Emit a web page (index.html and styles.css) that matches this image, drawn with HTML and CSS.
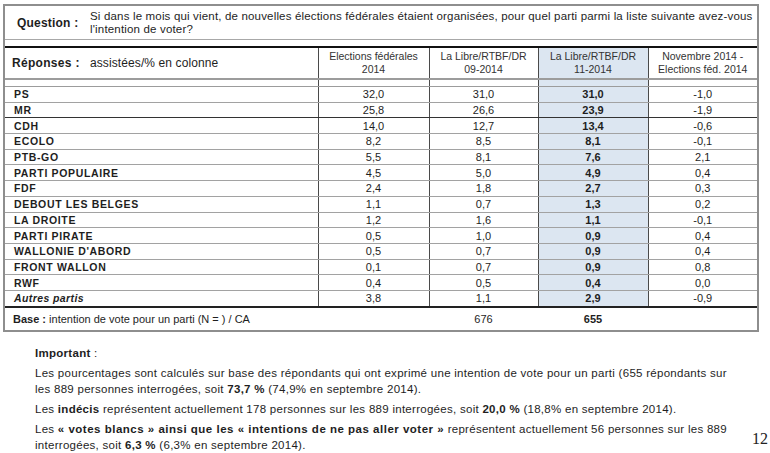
FILE: index.html
```html
<!DOCTYPE html>
<html lang="fr">
<head>
<meta charset="utf-8">
<title>Intentions de vote</title>
<link rel="stylesheet" href="styles.css">
</head>
<body>
<div class="page">
  <div class="sheet">
    <div class="question">
      <div class="q-label">Question :</div>
      <div class="q-text">Si dans le mois qui vient, de nouvelles élections fédérales étaient organisées, pour quel parti parmi la liste suivante avez-vous<br>l'intention de voter?</div>
    </div>
    <div class="q-spacer"></div>
    <table class="results">
      <colgroup>
        <col class="c-name"><col class="c-num"><col class="c-num2"><col class="c-num3"><col>
      </colgroup>
      <thead>
        <tr class="head">
          <th class="resp"><span class="resp-label">Réponses :</span><span class="resp-sub">assistées/% en colonne</span></th>
          <th>Elections fédérales<br>2014</th>
          <th>La Libre/RTBF/DR<br>09-2014</th>
          <th class="hl">La Libre/RTBF/DR<br>11-2014</th>
          <th>Novembre 2014 -<br>Elections féd. 2014</th>
        </tr>
        <tr class="gap"><td></td><td></td><td></td><td class="hl"></td><td></td></tr>
      </thead>
      <tbody>
        <tr><td class="party">PS</td><td>32,0</td><td>31,0</td><td class="hl">31,0</td><td>-1,0</td></tr>
        <tr class="dark"><td class="party">MR</td><td>25,8</td><td>26,6</td><td class="hl">23,9</td><td>-1,9</td></tr>
        <tr><td class="party">CDH</td><td>14,0</td><td>12,7</td><td class="hl">13,4</td><td>-0,6</td></tr>
        <tr><td class="party">ECOLO</td><td>8,2</td><td>8,5</td><td class="hl">8,1</td><td>-0,1</td></tr>
        <tr><td class="party">PTB-GO</td><td>5,5</td><td>8,1</td><td class="hl">7,6</td><td>2,1</td></tr>
        <tr><td class="party">PARTI POPULAIRE</td><td>4,5</td><td>5,0</td><td class="hl">4,9</td><td>0,4</td></tr>
        <tr><td class="party">FDF</td><td>2,4</td><td>1,8</td><td class="hl">2,7</td><td>0,3</td></tr>
        <tr><td class="party">DEBOUT LES BELGES</td><td>1,1</td><td>0,7</td><td class="hl">1,3</td><td>0,2</td></tr>
        <tr><td class="party">LA DROITE</td><td>1,2</td><td>1,6</td><td class="hl">1,1</td><td>-0,1</td></tr>
        <tr><td class="party">PARTI PIRATE</td><td>0,5</td><td>1,0</td><td class="hl">0,9</td><td>0,4</td></tr>
        <tr><td class="party">WALLONIE D'ABORD</td><td>0,5</td><td>0,7</td><td class="hl">0,9</td><td>0,4</td></tr>
        <tr><td class="party">FRONT WALLON</td><td>0,1</td><td>0,7</td><td class="hl">0,9</td><td>0,8</td></tr>
        <tr><td class="party">RWF</td><td>0,4</td><td>0,5</td><td class="hl">0,4</td><td>0,0</td></tr>
        <tr><td class="party other">Autres partis</td><td>3,8</td><td>1,1</td><td class="hl">2,9</td><td>-0,9</td></tr>
      </tbody>
      <tfoot>
        <tr class="base"><td class="base-label"><b>Base :</b> intention de vote pour un parti (N = ) / CA</td><td></td><td>676</td><td class="strong">655</td><td></td></tr>
      </tfoot>
    </table>
  </div>
  <div class="footer">
    <div class="notes">
      <p class="imp"><b>Important</b> :</p>
      <p>Les pourcentages sont calculés sur base des répondants qui ont exprimé une intention de vote pour un parti (655 répondants sur<br>les 889 personnes interrogées, soit <b>73,7 %</b> (74,9% en septembre 2014).</p>
      <p>Les <b>indécis</b> représentent actuellement 178 personnes sur les 889 interrogées, soit <b>20,0 %</b> (18,8% en septembre 2014).</p>
      <p>Les <b class="wide">« votes blancs » ainsi que les « intentions de ne pas aller voter »</b> représentent actuellement 56 personnes sur les 889<br>interrogées, soit <b>6,3 %</b> (6,3% en septembre 2014).</p>
    </div>
    <div class="page-num">12</div>
  </div>
</div>
</body>
</html>
```
FILE: styles.css
```css
html, body {
  margin: 0;
  padding: 0;
  background: #ffffff;
}
body {
  width: 770px;
  height: 453px;
  overflow: hidden;
  font-family: "Liberation Sans", Arial, sans-serif;
  color: #1e1e1e;
}
.page {
  padding: 4px 0 0 3px;
}
.sheet {
  width: 756px;
  box-sizing: border-box;
  border: 2px solid #8e8e8e;
}
.question {
  display: flex;
  height: 33px;
  border-bottom: 1px solid #a8a8a8;
  box-sizing: content-box;
}
.q-label {
  width: 85px;
  padding-left: 12px;
  box-sizing: border-box;
  font-weight: bold;
  font-size: 12px;
  padding-top: 10px;
  letter-spacing: 0.2px;
}
.q-text {
  flex: 1;
  font-size: 11.5px;
  line-height: 13px;
  padding-top: 4px;
  letter-spacing: 0.17px;
}
.q-spacer {
  height: 6px;
  border-bottom: 2px solid #111;
}
.results {
  width: 752px;
  border-collapse: collapse;
  table-layout: fixed;
}
.c-name { width: 313px; }
.c-num { width: 111px; }
.c-num2 { width: 109px; }
.c-num3 { width: 110px; }
.results th,
.results td {
  padding: 0;
  border-left: 1px solid #4a4a4a;
  border-right: 1px solid #4a4a4a;
  text-align: center;
  font-size: 11px;
  white-space: nowrap;
}
.results th:first-child,
.results td:first-child { border-left: none; }
.results th:last-child,
.results td:last-child { border-right: none; }
.head th {
  height: 30px;
  font-weight: normal;
  font-size: 10.5px;
  line-height: 13px;
  color: #333;
  border-bottom: 2px solid #9c9c9c;
}
.head th.resp {
  text-align: left;
  font-size: 12px;
  color: #1e1e1e;
}
.resp-label {
  font-weight: bold;
  padding-left: 7px;
  width: 78px;
  display: inline-block;
  letter-spacing: 0.3px;
}
.resp-sub {
  letter-spacing: 0.1px;
}
.gap td {
  height: 6px;
  border-bottom: 1px solid #9c9c9c;
}
tbody tr td {
  height: 14.7px;
  line-height: 14px;
  border-bottom: 1px solid #a2a2a2;
}
tbody tr.dark td {
  border-bottom-color: #333;
}
tbody tr:last-child td {
  border-bottom: 2px solid #222;
}
td.party {
  text-align: left;
  padding-left: 9px;
  font-weight: bold;
  font-size: 10.5px;
  letter-spacing: 0.65px;
}
td.party.other {
  font-style: italic;
  letter-spacing: 0.4px;
}
.hl {
  background: #dce6f1;
}
tbody td.hl {
  font-weight: bold;
}
.base td {
  height: 22px;
  border-left: none;
  border-right: none;
}
.base td.base-label {
  text-align: left;
  padding-left: 8px;
  font-size: 11px;
}
.base td.strong {
  font-weight: bold;
}
.footer {
  display: flex;
  align-items: flex-end;
}
.notes {
  width: 720px;
  padding-left: 32px;
  font-size: 11.5px;
  letter-spacing: 0.28px;
  line-height: 16px;
}
.notes p {
  margin: 0 0 4px 0;
}
.notes p.imp {
  margin: 13px 0 4px 0;
}
.wide {
  letter-spacing: 0.5px;
}
.page-num {
  font-family: "Liberation Serif", "Times New Roman", serif;
  font-size: 16px;
  margin-left: auto;
  margin-right: 2px;
  margin-bottom: 9px;
  color: #222;
}
```
